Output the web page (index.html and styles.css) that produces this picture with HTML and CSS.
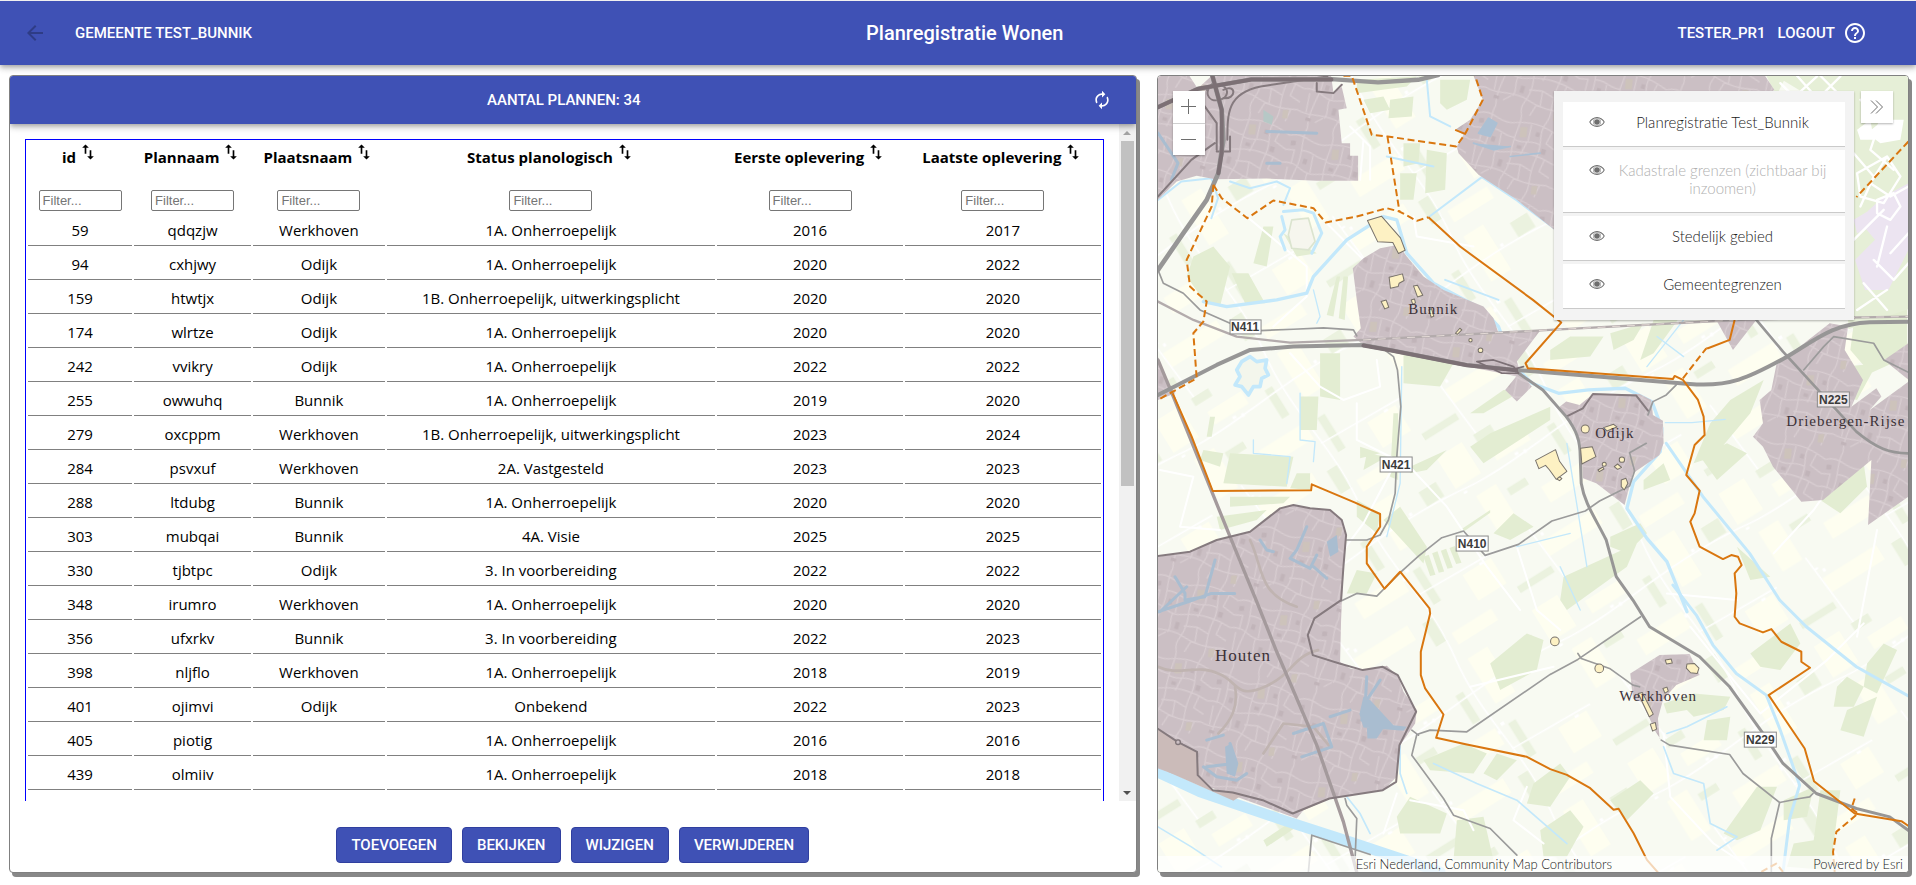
FILE: index.html
```html
<!DOCTYPE html>
<html lang="nl">
<head>
<meta charset="utf-8">
<title>Planregistratie Wonen</title>
<link rel="stylesheet" href="styles.css">
</head>
<body>
<svg class="defs" aria-hidden="true">
  <symbol id="sort" viewBox="0 0 24 24"><path d="M9 3L5 6.99h3V14h2V6.99h3L9 3zm7 14.01V10h-2v7.01h-3L15 21l4-3.99h-3z"/></symbol>
  <symbol id="eye" viewBox="0 0 16 16"><path d="M8 3C4.500 3 1.600 5.300.2 8c1.400 2.700 4.300 5 7.800 5s6.400-2.300 7.800-5C14.400 5.300 11.500 3 8 3zm0 9.100C5.200 12.100 2.800 10.400 1.300 8 2.800 5.600 5.200 3.900 8 3.900s5.200 1.700 6.700 4.100c-1.500 2.400-3.900 4.100-6.700 4.100z"/><path d="M8 3.900a4.100 4.100 0 1 0 0 8.200 4.100 4.100 0 0 0 0-8.200zm0 7.400a3.300 3.300 0 1 1 0-6.600 3.300 3.300 0 0 1 0 6.600z" opacity=".6"/><circle cx="8" cy="8" r="2.800"/></symbol>
</svg>
<header class="appbar">
  <div class="appbar-left">
    <button class="icon-btn back" disabled aria-label="Terug"><svg viewBox="0 0 24 24"><path d="M20 11H7.830l5.590-5.590L12 4l-8 8 8 8 1.410-1.410L7.830 13H20v-2z"/></svg></button>
    <span class="caps">GEMEENTE TEST_BUNNIK</span>
  </div>
  <h1 class="title">Planregistratie Wonen</h1>
  <div class="appbar-right">
    <span class="caps">TESTER_PR1</span>
    <button class="caps text-btn">LOGOUT</button>
    <button class="icon-btn" aria-label="Help"><svg viewBox="0 0 24 24"><path d="M11 18h2v-2h-2v2zm1-16C6.480 2 2 6.480 2 12s4.480 10 10 10 10-4.480 10-10S17.520 2 12 2zm0 18c-4.410 0-8-3.590-8-8s3.590-8 8-8 8 3.590 8 8-3.590 8-8 8zm0-14c-2.210 0-4 1.790-4 4h2c0-1.100.9-2 2-2s2 .9 2 2c0 2-3 1.750-3 5h2c0-2.250 3-2.500 3-5 0-2.210-1.790-4-4-4z"/></svg></button>
  </div>
</header>
<main class="main">
  <section class="card plans">
    <div class="plans-bar">
      <h2 class="caps plans-title">AANTAL PLANNEN: 34</h2>
      <button class="icon-btn refresh" aria-label="Vernieuwen"><svg viewBox="0 0 24 24"><path d="M12 6v3l4-4-4-4v3c-4.420 0-8 3.580-8 8 0 1.570.46 3.030 1.240 4.260L6.700 14.800c-.45-.83-.7-1.790-.7-2.800 0-3.310 2.690-6 6-6zm6.760 1.740L17.300 9.200c.44.84.7 1.790.7 2.800 0 3.310-2.690 6-6 6v-3l-4 4 4 4v-3c4.420 0 8-3.580 8-8 0-1.570-.46-3.030-1.240-4.260z"/></svg></button>
    </div>
    <div class="scroller">
      <div class="frame">
        <table class="grid">
          <colgroup><col class="c-id"><col class="c-plan"><col class="c-place"><col class="c-status"><col class="c-first"><col class="c-last"></colgroup>
          <thead><tr>
            <th><label class="head" for="f1">id <svg class="sort"><use href="#sort"/></svg></label><input id="f1" placeholder="Filter..."></th>
            <th><label class="head" for="f2">Plannaam <svg class="sort"><use href="#sort"/></svg></label><input id="f2" placeholder="Filter..."></th>
            <th><label class="head" for="f3">Plaatsnaam <svg class="sort"><use href="#sort"/></svg></label><input id="f3" placeholder="Filter..."></th>
            <th><label class="head" for="f4">Status planologisch <svg class="sort"><use href="#sort"/></svg></label><input id="f4" placeholder="Filter..."></th>
            <th><label class="head" for="f5">Eerste oplevering <svg class="sort"><use href="#sort"/></svg></label><input id="f5" placeholder="Filter..."></th>
            <th><label class="head" for="f6">Laatste oplevering <svg class="sort"><use href="#sort"/></svg></label><input id="f6" placeholder="Filter..."></th>
          </tr></thead>
          <tbody>
            <tr><td>59</td><td>qdqzjw</td><td>Werkhoven</td><td>1A. Onherroepelijk</td><td>2016</td><td>2017</td></tr>
            <tr><td>94</td><td>cxhjwy</td><td>Odijk</td><td>1A. Onherroepelijk</td><td>2020</td><td>2022</td></tr>
            <tr><td>159</td><td>htwtjx</td><td>Odijk</td><td>1B. Onherroepelijk, uitwerkingsplicht</td><td>2020</td><td>2020</td></tr>
            <tr><td>174</td><td>wlrtze</td><td>Odijk</td><td>1A. Onherroepelijk</td><td>2020</td><td>2020</td></tr>
            <tr><td>242</td><td>vvikry</td><td>Odijk</td><td>1A. Onherroepelijk</td><td>2022</td><td>2022</td></tr>
            <tr><td>255</td><td>owwuhq</td><td>Bunnik</td><td>1A. Onherroepelijk</td><td>2019</td><td>2020</td></tr>
            <tr><td>279</td><td>oxcppm</td><td>Werkhoven</td><td>1B. Onherroepelijk, uitwerkingsplicht</td><td>2023</td><td>2024</td></tr>
            <tr><td>284</td><td>psvxuf</td><td>Werkhoven</td><td>2A. Vastgesteld</td><td>2023</td><td>2023</td></tr>
            <tr><td>288</td><td>ltdubg</td><td>Bunnik</td><td>1A. Onherroepelijk</td><td>2020</td><td>2020</td></tr>
            <tr><td>303</td><td>mubqai</td><td>Bunnik</td><td>4A. Visie</td><td>2025</td><td>2025</td></tr>
            <tr><td>330</td><td>tjbtpc</td><td>Odijk</td><td>3. In voorbereiding</td><td>2022</td><td>2022</td></tr>
            <tr><td>348</td><td>irumro</td><td>Werkhoven</td><td>1A. Onherroepelijk</td><td>2020</td><td>2020</td></tr>
            <tr><td>356</td><td>ufxrkv</td><td>Bunnik</td><td>3. In voorbereiding</td><td>2022</td><td>2023</td></tr>
            <tr><td>398</td><td>nljflo</td><td>Werkhoven</td><td>1A. Onherroepelijk</td><td>2018</td><td>2019</td></tr>
            <tr><td>401</td><td>ojimvi</td><td>Odijk</td><td>Onbekend</td><td>2022</td><td>2023</td></tr>
            <tr><td>405</td><td>piotig</td><td></td><td>1A. Onherroepelijk</td><td>2016</td><td>2016</td></tr>
            <tr><td>439</td><td>olmiiv</td><td></td><td>1A. Onherroepelijk</td><td>2018</td><td>2018</td></tr>
          </tbody>
        </table>
      </div>
      <div class="scrollbar" aria-hidden="true"><span class="arrow up"></span><span class="thumb"></span><span class="arrow down"></span></div>
    </div>
    <div class="actions">
      <button class="btn">TOEVOEGEN</button><button class="btn">BEKIJKEN</button><button class="btn">WIJZIGEN</button><button class="btn">VERWIJDEREN</button>
    </div>
  </section>
  <section class="card map">
    <svg class="map-canvas" viewBox="0 0 750 796" preserveAspectRatio="xMidYMid slice">
      <defs>
        <pattern id="streets" width="260" height="230" patternUnits="userSpaceOnUse" patternTransform="rotate(17)">
          <rect width="260" height="230" fill="#cbbfc4"/>
          <path d="M0 36C40 10 70 50 110 34S190 10 260 36M0 120c50-20 60 20 100 8s80-30 160-8M0 186c40 14 80-16 130 0s90 10 130 0M44 0c-10 40 10 70 4 114s-14 80-4 116M124 0c14 24-6 60 6 124s-20 70-6 106M206 0c-20 50 10 60 0 118s10 80 0 112M46 70c30-12 50 14 80 4M84 74l6 52M128 80c30 10 40-14 76-6M164 24l4 50M166 76l-8 42M20 128l6 58M84 128c-8 20 10 40 0 60M126 156l40-8 38 10M166 148l6 44M230 26l-8 40 38 14M232 112l-6 40 34 10M0 80l26-6 2 44M60 208l20-20M150 230l10-36M240 190l-6 40" fill="none" stroke="#d8cdd1" stroke-width="4"/>
          <path d="M60 90h12v16H60zM140 94h14v10h-14zM8 50l14-4 3 14-14 4zM214 84h14v16h-14zM100 150h12v22h-12zM184 40h12v14h-12zM30 200h16v10H30z" fill="#c1b4b9"/>
          <path d="M134 40l20-6 6 30-20 6zM218 200l16-6 4 26-16 4z" fill="#cdc3bb"/>
        </pattern>
        <pattern id="fields" width="660" height="540" patternUnits="userSpaceOnUse" patternTransform="rotate(-32)">
          <rect width="660" height="540" fill="#f8faf2"/>
          <path d="M0 0h90v110H0zM150 60h120v44H150zM40 160h70v140H40zM220 240h160v56H220zM420 20h70v160h-70zM540 340h100v90H540zM130 380h190v50H130zM420 470h140v40H420z" fill="#fefef0"/>
          <path d="M130 0h60v26h-60zM330 96h26v100h-26zM130 190h64v24h-64zM0 456h120v22H0zM560 60h60v50h-60zM420 250h26v120h-26zM360 400h40v80h-40z" fill="#ebf2df"/>
          <path d="M0 120C200 150 400 90 660 120M390 0c-30 200 30 340 0 540M120 300l20 240M390 320l270 10" fill="none" stroke="#fff" stroke-width="5"/>
          <path d="M14 130h12v7H14zM205 112h12v9h-12zM232 118h9v12h-9zM122 342h14v7h-14zM144 356h9v10h-9zM400 236h12v10h-12zM380 252h8v12h-8zM600 336h14v8h-14zM500 98h10v10h-10z" fill="#fff"/>
        </pattern>
      </defs>
      <g transform="scale(.33333) translate(-24 -228)" stroke-linejoin="round" stroke-linecap="round">
        <rect x="24" y="228" width="2250" height="2388" fill="url(#fields)"/>

        <g fill="#e3edd2">
          <path d="M620 240l180-10-30 30-150 20zM870 240l90 0-10 60-60 30-20-20zM640 300l60-10 20 40-60 10zM720 300l70-10-5 60-70 5zM760 430l50 0-5 60-45 10zM830 450l60 10-5 110-60 10zM750 520l50 0-10 80-40 0zM130 770l-20 60 50 70 50 20 30-120-50-60zM245 820l50 0 50 90-60 0zM560 830l10 0-20 120-20-5zM580 830l14 0-10 130-18-5zM370 680l-20 120-40-10 30-110zM400 700l100 60-60 10z"/>
          <path d="M760 1050l150 40-40 70-110-10zM510 1060l60 0 0 140-60-10zM450 1190l55 0-5 100-50 0zM180 1250l15 0-10 60-15 0zM160 1350l60 10-10 40-60-20zM240 1360l190 10-20 90-190-10zM440 1420l40 0 0 50-60-5zM960 1340l60-40 180-80 0 40-200 130zM1060 1170l60 0-120 70-40 0z"/>
          <path d="M240 1490l180 0-20 20-160 10zM200 1550l150-20-30 30-110 30zM620 1500l70 40-10 60-60-50zM700 1560l50-40 80 120-10 50zM630 1340l60 20-60 15zM650 1360l60 10-70 40zM730 1240l14 0 0 200-24-10z"/>
          <path d="M780 1400l110-50-60 60-50 10zM820 1670l16-6 20 60-16 4zM846 1660l16-6 20 60-16 4zM872 1652l16-6 20 56-16 4zM898 1644l16-6 20 50-16 4zM1030 1600l60-60 60 40-70 40zM930 1590l90-60 0 8-84 60zM620 1710l60 10-30 60-60 0z"/>
          <path d="M1200 1050l60-40 100 0-40 60-120 10zM1380 1000l100-30-30 50-60 30zM1510 960l80-10-80 110-40 20zM2110 970l160-60 0 160-110 50-60-70zM2090 1100l90-10-60 110-90-20zM1740 1200l100-60-40 100-110 130-60 20 50-120zM1650 1370l80-40 60 30-90 80zM1380 1610l90-40 20 30-60 60-50-20zM1480 1440l60-50 20 50-80 30zM1760 1640l100 90-60 10zM2010 1500l130-110 10 70-80 80z"/>
          <path d="M1240 1730l220-100-30 70-180 130-20-30zM1800 1960l120-90 30 60-60 80-60-10zM1540 2110l90-30 110 10-20 40-90 20-20-20-60 10zM1670 2160l70-10-10 70-70 0zM2060 2060l30-30 50 30-30 60-60 0zM2150 1990l50-60 40 20-60 130-40-20zM2090 2130l90-40-40 120-70-20zM1900 2400l90-40-20 90-70 10zM2010 2370l60 0-30 240-130-10 20-70 60-10zM1820 2360l60 0-50 130-70 30-40-20z"/>
          <path d="M820 2280l120-50 70 30-40 60-130-10zM1040 2260l60 20-60 60-40-20zM1020 1990l110-90 50 20-20 90-110 60zM780 2390l110 50-20 60-120 0-10-50zM920 2460l80-10 30 130-120 0zM1150 2350l80-60 30 40-60 90-70-10zM1380 2400l90-60 40 40-80 80zM1170 2490l90-60 40 50-50 90-70 0zM340 2520l90-60 10 20-90 60z"/>
        </g>
        <path d="M1876 228l398 0 0 700-180 60-20-640zM1848 228h60l-30 60z" fill="#e6efd7"/>
        <path d="M2200 590l74-40 0 200-60 120-70 0-30-90 60-60-50-60zM2110 660l50-30 10 50-50 20z" fill="#ece4f1"/>
        <path d="M1890 250l90 90M1940 228l80 90M2010 228l60 60M1890 330l110-100M1960 340l110-110M2130 300l60 60-30 90 70 60M2110 460l60 70-40 90M2210 470l-50 80 60 40 54-30M2120 520l90-50 40 60-50 80-70-20zM2180 600l50-20 20 40-30 40-40-20zM2110 720l90-90M2170 780l60 60 44-50M2120 930l90-60M2210 680l-30 120M2220 760l54-60M2140 850l70 80" fill="none" stroke="#fff" stroke-width="7"/>
        <path d="M2150 400l50-40 60 0-10 60-60 10zM2120 390l40-30 10 60-40 0z" fill="#fff"/>

        <g fill="none" stroke="#fff" stroke-width="6">
          <path d="M290 650l180 150 0 90-100 90M640 420l-10 120M530 670l110 110M790 650l10 60 170 30M600 380l60 60 0 100M420 1060l90 100 70 40 110-40-10-80M620 1210l0 110 120 60-100 190-60 80M760 1380l130 140 120 180 100 130M30 1410l100 20-40 150 120 10M1100 1640l60 190 70 60"/>
          <path d="M1210 2000l-250 60M1540 2200l20 190 130 140 90 60M1760 1800l-210-20M2080 1400l-90 130-120 130M2180 1590l-60 320M1620 1880l210 260 200-160 110-110"/>
          <path d="M780 2400l160 30 30 60M700 2500l40-120M1130 2360l-40 100 90 70"/>
        </g>

        <g fill="none" stroke="#c3e8fb">
          <path d="M160 905l70 15 150-20 90-20 20-50 100-110 110-70 40 10 30 100 80 90 150 80 45 50 40 110 60 60 80 30 90-10 110-5 80 40 30 80-5 70-80 90-20 80 60 90 60 70 60 150" stroke-width="10"/>
          <path d="M1568 1755l70 90 50 90 70 85 90 65 40 100 60 170-30 100-20 160" stroke-width="9"/>
          <path d="M1548 1330l110 160 140 170 90 140 80 80 150 120 160 90" stroke-width="9"/>
          <path d="M10 2310l140 65 250 85 200 65 270 90" stroke-width="32"/>
          <path d="M24 600l70-55 90-10 20 60-20 60M835 652l160-120 105 70 120 90M710 470l140 30M830 240l10 110 60 30M1045 900l-160-60M240 545l60 20 80-20 40 20-20 50" stroke-width="6"/>
          <path d="M400 635l60-5 30 10 25 60-20 40-10 20M395 650l10 40-15 20 15 40" stroke-width="9"/>
          <path d="M450 1180l0 140 45 5-5 60M310 1320l0 40 110 10-10 80M755 1100l-5 350-40 160M1250 1330l60 370M1100 1640l160-40M1230 1700l60 130M1545 1268l80 0 100-10M1490 1100l110-140M1520 1010l80 60M490 870l20 80-10 20" stroke-width="4"/>
          <path d="M590 2390l40 50 30 60M750 2120l0 200 20 60M850 2290l130 60 120 50 150 130M24 2480l100 60 90 60M1540 2240l30 80 90 30 20 120 80 40-60 40M1550 2200l60-20 120-60" stroke-width="5"/>
        </g>
        <path d="M275 1085l25-15 20 15 30-5-5 25 10 20-20 10-5 25-20 0-15 25-20-25-20-5 15-25-10-20z" fill="#f3f6ec" stroke="#c3e8fb" stroke-width="11"/>
        <path d="M425 660l50-5 20 70-20 25-50-5-10-40z" fill="#f6f6ee" stroke="#dbe4cf" stroke-width="5"/>

        <g fill="url(#streets)">
          <path d="M24 228h94l25 38 42-38h358l7 50 25-16 15 63-25 5 10 100h25v38h24v75l-124 0-150-7-155 2-55-10-60 17-56 55z"/>
          <path d="M970 228l28 72-38 60-45 30 25 15-20 35 5 20 60 65 115 75 112 90 90 60 570-480-28-42z"/>
          <path d="M608 805l32-30 50-30 55-10 25 35 50 60 60 40 60 25 60 25 30 35 15 45 125-8-70 93 10 30 35 45-45 45-35-35 33-40-18-5-130-25-150-30-100-20-60-15-30-25 22-25-12-85z"/>
          <path d="M24 1670l96-15 80-35 100-25 90-70 40-10 50 10 60 5 35 30 13 45-8 95-7 160-3 125 30 20 40 5 70-13 35 33 15 45 40 55-5 40-45 65-10 95-40 40-160 25-80 35-20 25-416-150z"/>
          <path d="M1228 1220l20-15 40 10 40-33 140 0 35 18 5 45 30 17 2 68-12 35-80 55-25 95-85-65-40-15-5-95-20-60-25-30z"/>
          <path d="M1878 1095l160-125 55 10-10 70 55 90-35 80 75-55 15 25-35 40 116-85 0 345-121 85 10-195-145 120-65 5-85-105-30-60-30-30 30-40-10-70 35-30zM2274 1030l-73 50 73 60zM1698 960h120l-70 90z"/>
          <path d="M1440 2020l88-55 90-3 30 63-70 30-40 45-15 55 5 60 5 5-17-25-18-40-25-50-25-10z"/>
          <path d="M24 1070l8 40 44 70-52 20z"/>
        </g>
        <path d="M24 2185l61 40 58 30 5 70 42 45 90 12-30 20-226-100z" fill="#cbbbb9"/>

        <g fill="none" stroke="#c0b4b1" stroke-width="8">
          <path d="M24 2000c60 30 120-10 180 20 60 20 50 80 140 40s80-90 160-110M255 2060c10 60-10 100-50 140M340 2260l60-90 90 10 50 60M300 1620c40 80 20 160 140 200"/>
        </g>
        <g fill="none" stroke="#a9bdd0" stroke-width="9">
          <path d="M75 1730l30 50 0 20 60-10 30-110M110 1760l-80 75M470 1580l-30 70-20 25 60 30 20-40M490 1700l40 35M330 1620l20 30 20 5M24 1835l90-30 70-25 70 0M650 2030l-5 90-10 40M690 2040l-40 60M540 2150l60-20M430 2200l90-30 25 70-90 30M240 2230l10 60-80 10M170 2220l50-15M160 2300l40 30 60 10 30-20M500 400l-150-5M350 490l40 0M24 400l60 90-20 50"/>
        </g>
        <path d="M640 2090l20 10 70 75 40 5-10 12-120-10-12-40zM650 2180l50 5-20 30-28 0zM225 2240l20-10 20 60-10 40-25-10zM530 1625l30-20 5 50-25 15z" fill="#a9bdd0"/>
        <path d="M985 400l30-45 25 15-20 40zM970 430l60 20 50-10M1080 470l90-10" fill="#abc0d4" stroke="#abc0d4" stroke-width="5"/>
        <path d="M340 330l30 20-5 25-25-10z" fill="#b6c8c6"/>

        <g fill="none" stroke="#b3abac" stroke-width="7">
          <path d="M24 905l106 55 130 50 160 18 220-8 560-30 600-32 474-8"/>
        </g>
        <path d="M24 1080l46 110 170 420 80 195 60 150 120 280 80 230 45 170" fill="none" stroke="#a49a9c" stroke-width="10"/>
        <path d="M640 1020l560-30 600-32 474-8" fill="none" stroke="#e4dad6" stroke-width="3" stroke-dasharray="22 22"/>

        <g fill="none" stroke="#9b9b9b" stroke-width="5">
          <path d="M24 810l16 40 60 30 50 50 90 40 90 22 100-4 90-4 90 6 10 18"/>
          <path d="M690 1040l40 30 12 40 10 110-12 150-5 110-20 80-25 45-40 15-60 0"/>
          <path d="M573 1803l47-23 60 8 25-25 50-50 50-45 70-55 65-20 65 73 100-33 100-70 100-30 43-30 90-45 15-45-15-55 50-28"/>
          <path d="M1200 2023l83-45 188-128M1283 1960l10 15 85 30 70 50 20 5M1200 2023l-250 172-110-5-40 13-15 62 95 130 30 50 110 40 80 80M1533 2220l25 15 180 28 40 57 110 87 60-12 30-5 10-10M1888 2407l-25 108v100M785 2190l20 15M585 2395l5 20 30 40-5 120M475 2615l10-110 175 58"/>
          <path d="M1578 1155l-30 30-40 20-15 40M1960 1110l60-70 30-30 120 20 30 50 74 37"/>
        </g>
        <g fill="none" stroke="#857a7e" stroke-width="6">
          <path d="M24 1668l96-13 80-35 100-25 90-70 40-10 50 10 60 5 35 30 13 45-8 95-7 100-80 55-20 50 15 60 80 25 70 20 60-10 45 25 55 110-50 100-10 110-40 25-160 25-110 45-90-40-90-23-60-7-45-45-2-70-58-30-61-40"/>
          <path d="M24 325l30-15 90-40M150 300l50 70 0 80M240 410v45h-40M170 270c60-40 80 20 40 30s-50-30-20-50M220 270c40-20 40 30 0 25M232 420c0-80 0-140 100-160l200-30M24 590l100-110 70-50M500 250v25l50 5 25-25"/>
          <path d="M1248 1250l50-25 30-43 130 5 35 45"/>
        </g>
        <g fill="none" stroke="#979696">
          <path d="M24 322l120-55 160-28 240-1 140 10 120-8 60-14" stroke-width="13"/>
          <path d="M187 228l28 102 5 90-15 100-35 80-70 100-76 110" stroke-width="14"/>
          <path d="M24 1185l176-90 100-45 130-10 210-5 80 15 230 45 148 15 300 24 220 18c120 10 180-20 280-75 90-50 140-105 260-110l126-2" stroke-width="12"/>
          <path d="M1098 1115l80 55 70 80c30 40 42 70 42 120l3 80c10 60 40 100 75 170l30 110 50 70 50 80 150 90 90 90 100 140 60 90 100 90 120 45 100 25 76 55" stroke-width="9"/>
          <path d="M1818 960l80 95 110 120 110 120c60 50 100 65 156 65" stroke-width="8"/>
        </g>
        <path d="M640 1037l80 14 230 45 148 15" fill="none" stroke="#7c7075" stroke-width="12"/>
        <path d="M205 520l10-60 0-130-28-102M24 322l120-55 160-28h240" fill="none" stroke="#7c7075" stroke-width="12"/>
        <path d="M980 1085l50-5 60 20 15 20-50 0zM1080 1110l40-10" fill="none" stroke="#7c7075" stroke-width="5"/>
        <circle cx="84" cy="2226" r="7" fill="#cbbfc4" stroke="#7f7478" stroke-width="4"/>

        <g fill="none" stroke="#d9760f" stroke-width="6" stroke-linecap="butt">
          <g stroke-dasharray="21 11">
            <path d="M580 228h25l60 177 47 5 206 30 27-38 53-102-23-72M712 410l36 225M190 555l25 40 77 60 78-53 120 23 37 43 93-18 90-25 38 10 52 28 35-11M190 555l-5 65-75 160 10 80 50 45-10 60-30 35 10 135-116 65M2274 425l-156 167M2113 2395l-10 30 20 15-65 55-10 60 5 60M1833 2615l45-25 20 25M1598 1135l70-90"/>
          </g>
          <path d="M915 390l30 12M835 652l95 88 218 160 85 68-107 122 7 15 435 32 5-9 25 12 45 60 17 50 3 55-30 30-25 90 40 47-15 68-13 25 28 75 70 37 25-12 20 5 11 25-21 25 5 60-5 70 15 20 70 27 25-10 30 38 60 30v30l26 18-124 82 108 160 28 98 122 97 140 23 28 19M1668 1045l5 0 65-25 15-60"/>
          <path d="M68 1180l57 130 63 163 295-2 2-18 130 55 75 34v38l-40 60v50l53 76 47-51 88 110 2 15-28 115v70l13 40 55 78-22 70 92 20 180 37 70 37 50 17 70 40 70 65 15-3 45 73 40 80 70 80"/>
        </g>

        <g fill="#fdf1c3" stroke="#77716a" stroke-width="3">
          <path d="M652 662l42-13 57 65 14 37-20 10-17-33-45-2zM717 832l40-10 5 20-15 8-3 10-23 5zM790 858l12-2 16 30-16 5zM693 905l15-5 8 22-12 5zM783 900l10-3 3 12-8 4zM836 930l8-4 7 23-8 3zM916 1000l13-15 6 5-13 13z"/>
          <circle cx="961" cy="1021" r="5"/><circle cx="991" cy="1051" r="7"/>
          <path d="M1156 1381l60-32 12 35 22 30-32 24-20-28-12-14-20 10zM1291 1345l35-5 11 30-42 22zM1360 1283l30-10 10 8-30 12zM1343 1410l15-9 3 6-14 8zM1392 1400l10-8 12 10-12 6zM1413 1440l14-5 6 15-11 20-9-10zM1220 1437l8-7 7 6-7 6z"/>
          <circle cx="1305" cy="1287" r="12"/><circle cx="1362" cy="1393" r="6"/><circle cx="1415" cy="1379" r="8"/>
          <circle cx="1214" cy="1924" r="13"/><circle cx="1347" cy="2005" r="13"/>
          <path d="M1464 2080l12-3 33 65-12 8zM1500 2172l15-5 4 20-12 6zM1545 1980l18-3 3 12-17 3zM1610 1992l22-2 14 14-5 16-20-2-13-14zM1538 2065l12-4 4 12-10 6z"/>
        </g>
      </g>
      <g class="shields">
        <g fill="#fff" stroke="#8a8a8a" stroke-width="1"><rect x="72" y="244" width="31" height="14"/><rect x="222" y="381" width="32" height="15"/><rect x="298" y="460" width="32" height="15"/><rect x="659" y="316" width="32" height="15" fill="#eee8ea"/><rect x="586" y="656" width="32" height="15"/></g>
        <text x="87" y="255">N411</text><text x="238" y="393">N421</text><text x="314" y="472">N410</text><text x="675" y="328">N225</text><text x="602" y="668">N229</text>
      </g>
      <g class="places">
        <text x="250" y="238">Bunnik</text><text x="437" y="362">Odijk</text><text x="57" y="585" class="city">Houten</text><text x="461" y="625">Werkhoven</text><text x="628" y="350">Driebergen-Rijse</text>
      </g>
    </svg>
    <div class="zoom">
      <button class="map-btn" aria-label="Inzoomen"><svg viewBox="0 0 16 16"><path d="M7.500 0v15M0 7.500h15"/></svg></button>
      <button class="map-btn" aria-label="Uitzoomen"><svg viewBox="0 0 16 16"><path d="M0 7.500h15"/></svg></button>
    </div>
    <div class="layers-wrap">
      <ul class="layers">
        <li class="layer"><button class="eye" aria-label="Laag tonen"><svg><use href="#eye"/></svg></button><span class="layer-name">Planregistratie Test_Bunnik</span></li>
        <li class="layer off"><button class="eye" aria-label="Laag tonen"><svg><use href="#eye"/></svg></button><span class="layer-name">Kadastrale grenzen (zichtbaar bij inzoomen)</span></li>
        <li class="layer"><button class="eye" aria-label="Laag tonen"><svg><use href="#eye"/></svg></button><span class="layer-name">Stedelijk gebied</span></li>
        <li class="layer"><button class="eye" aria-label="Laag tonen"><svg><use href="#eye"/></svg></button><span class="layer-name">Gemeentegrenzen</span></li>
      </ul>
      <button class="map-btn collapse" aria-label="Inklappen"><svg viewBox="0 0 16 16"><path d="M2 1.500L8.500 8 2 14.500M7 1.500L13.500 8 7 14.500"/></svg></button>
    </div>
    <div class="credits"><span class="sources">Esri Nederland, Community Map Contributors</span><span>Powered by Esri</span></div>
  </section>
</main>
</body>
</html>
```
FILE: styles.css
```css
* { box-sizing: border-box; }
body {
  margin: 0;
  height: 100vh;
  display: flex;
  flex-direction: column;
  border-top: 1px solid #f0f0f0;
  background: #fff;
  color: #000;
  font-family: "Open Sans", "Noto Sans", sans-serif;
  font-size: 15px;
  overflow: hidden;
}
button { font: inherit; color: inherit; border: 0; background: none; padding: 0; }
.defs { display: none; }

.appbar {
  flex: none;
  height: 64px;
  padding: 0 49px 0 23px;
  display: flex;
  align-items: center;
  justify-content: space-between;
  background: #3f51b5;
  color: #fff;
  box-shadow: 0 2px 4px -1px rgba(0,0,0,.2), 0 4px 5px rgba(0,0,0,.14), 0 1px 10px rgba(0,0,0,.12);
  font-family: Roboto, sans-serif;
}
.appbar-left { display: flex; align-items: center; gap: 28px; }
.appbar-right { display: flex; align-items: center; }
.caps { margin: 0; font-family: Roboto, sans-serif; font-size: 15px; font-weight: 500; line-height: 24px; }
.text-btn { margin: 0 8px 0 12px; }
.title { margin: 0; font-size: 20px; font-weight: 500; line-height: 32px; }
.icon-btn { width: 24px; height: 24px; }
.icon-btn svg { display: block; width: 100%; height: 100%; fill: currentColor; }
.back { color: rgba(0,0,0,.26); }

.main { flex: 1; min-height: 0; display: flex; gap: 20px; padding: 10px 7px 12px 9px; }
.card { border: 1px solid #808080; border-radius: 4px; box-shadow: 3px 4px #888; background: #fff; min-width: 0; overflow: hidden; }

.plans { flex: 3 1 0; display: flex; flex-direction: column; }
.plans-bar {
  position: relative;
  z-index: 1;
  flex: none;
  height: 48px;
  padding: 0 24px 0 26px;
  display: flex;
  align-items: center;
  background: #3f51b5;
  color: #fff;
  box-shadow: 0 2px 4px -1px rgba(0,0,0,.2), 0 4px 5px rgba(0,0,0,.14), 0 1px 10px rgba(0,0,0,.12);
}
.plans-title { flex: 1; text-align: center; }
.refresh { width: 20px; height: 20px; }
.scroller { flex: 1; min-height: 0; display: flex; overflow: hidden; }
.frame { flex: 1; margin: 15px 15px 0; border: 1px solid #00f; border-bottom: 0; }
.grid { width: 100%; table-layout: fixed; border-collapse: separate; border-spacing: 2px; text-align: center; }
.c-id { width: 9.8%; }
.c-plan { width: 11%; }
.c-place { width: 12.4%; }
.c-status { width: 30.9%; }
.c-first { width: 17.5%; }
.c-last { width: 18.4%; }
th { height: 70px; padding: 0; vertical-align: top; font-weight: 700; }
td { height: 32px; padding: 0; border-bottom: 1px solid #808080; line-height: 24px; white-space: nowrap; }
.head { display: flex; justify-content: center; gap: 2px; height: 47px; line-height: 30px; white-space: nowrap; }
.sort { width: 20px; height: 20px; }
th input {
  width: 83px;
  height: 21px;
  padding: 1px 3px;
  border: 1px solid #767676;
  border-radius: 2px;
  font-family: "Liberation Sans", sans-serif;
  font-size: 13px;
}
th input::placeholder { color: #757575; }

.scrollbar { flex: none; width: 17px; display: flex; flex-direction: column; background: #f1f1f1; }
.arrow { width: 17px; height: 17px; display: grid; place-items: center; }
.arrow::before { content: ""; border: 4px solid transparent; }
.up::before { border-top: 0; border-bottom-color: #a3a3a3; }
.down::before { border-bottom: 0; border-top-color: #505050; }
.thumb { height: 51%; margin: 0 2px auto; background: #c1c1c1; }

.actions { flex: none; display: flex; justify-content: center; gap: 10px; padding: 26px 0 9px; }
.btn {
  height: 36px;
  padding: 0 14px;
  border: 1px solid #303f9f;
  border-radius: 4px;
  background: #3f51b5;
  color: #fff;
  font-family: Roboto, sans-serif;
  font-weight: 500;
}

.map { flex: 2 1 0; position: relative; font-family: Lato, sans-serif; font-weight: 300; color: #202020; }
.map-canvas { display: block; width: 100%; height: 100%; }
.shields text { font: 700 12px "Liberation Sans", sans-serif; fill: #3c3c3c; text-anchor: middle; }
.places text { font: 15px "Liberation Serif", serif; letter-spacing: 1px; fill: #3c3238; }
.places .city { font-size: 17px; }
.map-btn { width: 32px; height: 32px; display: grid; place-items: center; background: #fff; }
.map-btn svg { width: 16px; height: 16px; fill: none; stroke: #6e6e6e; stroke-width: 1; }
.zoom { position: absolute; left: 15px; top: 15px; display: grid; box-shadow: 0 1px 2px rgba(0,0,0,.3); }
.zoom .map-btn + .map-btn { border-top: 1px solid #d0d0d0; }
.layers-wrap { position: absolute; right: 15px; top: 15px; display: flex; align-items: flex-start; gap: 7px; }
.collapse, .layers { box-shadow: 0 1px 2px rgba(0,0,0,.3); }
.layers { list-style: none; margin: 0; width: 300px; padding: 11px 9px; background: #f3f3f3; display: grid; gap: 3px; }
.layer { display: flex; padding: 11px 15px 15px 26px; background: #fff; border-bottom: 1px solid #cacaca; font-size: 15px; line-height: 18px; }
.off { color: #b0b0b0; }
.eye { width: 16px; height: 18px; color: #6e6e6e; }
.eye svg { display: block; width: 16px; height: 16px; fill: currentColor; }
.layer-name { flex: 1; text-align: center; margin-left: 10px; }
.credits {
  position: absolute;
  left: 0;
  right: 0;
  bottom: 0;
  display: flex;
  padding: 0 5px;
  background: rgba(255,255,255,.7);
  font-size: 13px;
  line-height: 16px;
}
.sources { flex: 1; text-align: center; margin-right: 8px; }
```
